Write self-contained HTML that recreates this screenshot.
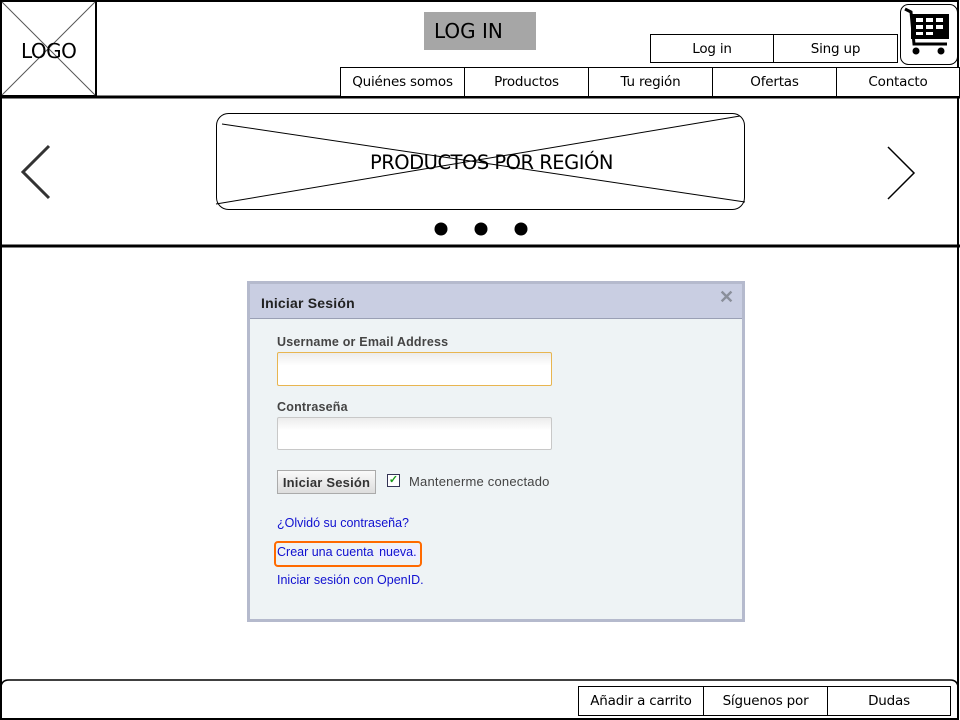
<!DOCTYPE html>
<html><head><meta charset="utf-8"><style>
*{margin:0;padding:0;box-sizing:border-box}
body{width:960px;height:720px;background:#fff;position:relative;overflow:hidden;font-family:"Liberation Sans",sans-serif}
.a{position:absolute}
.t{font-family:"DejaVu Sans","Liberation Sans",sans-serif}
.cell{position:absolute;border:1px solid #000;display:flex;align-items:center;justify-content:center;font-size:13.5px;font-family:"DejaVu Sans",sans-serif;background:#fff;letter-spacing:-.2px}
.lbl{font-family:"Liberation Sans",sans-serif;font-weight:bold;font-size:12.5px;color:#444;letter-spacing:.2px}
.lnk{font-size:12.5px;color:#1010d0;letter-spacing:0}
</style></head><body>
<svg class="a" style="left:0;top:0" width="960" height="720">
<rect x="1" y="1" width="957" height="718" fill="none" stroke="#000" stroke-width="2"/>
<line x1="0" y1="97" x2="960" y2="97" stroke="#000" stroke-width="3"/>
<line x1="0" y1="246" x2="960" y2="246" stroke="#000" stroke-width="3"/>
<rect x="1" y="1" width="95" height="95" fill="none" stroke="#000" stroke-width="2"/>
<line x1="2" y1="2" x2="95" y2="95" stroke="#555" stroke-width="1"/>
<line x1="95" y1="2" x2="2" y2="95" stroke="#555" stroke-width="1"/>
<rect x="216.5" y="113.5" width="528" height="96" rx="12" fill="none" stroke="#000"/>
<line x1="222" y1="124" x2="745" y2="202" stroke="#000"/>
<line x1="216" y1="204" x2="740" y2="116" stroke="#000"/>
<circle cx="441" cy="229" r="6.5"/><circle cx="481" cy="229" r="6.5"/><circle cx="521" cy="229" r="6.5"/>
<polyline points="49,146 23,172 49,198" fill="none" stroke="#333" stroke-width="3"/>
<polyline points="888,147 914,173 888,199" fill="none" stroke="#000" stroke-width="1.5"/>
<rect x="900.5" y="4.5" width="57" height="60" rx="8" fill="none" stroke="#000"/>
<path d="M905 9 L911 12 L914 44 L947 44" fill="none" stroke="#000" stroke-width="3"/>
<rect x="911" y="14" width="38" height="25" fill="#000"/>
<g fill="#fff"><rect x="916" y="18" width="7" height="4"/><rect x="926" y="18" width="7" height="4"/><rect x="936" y="18" width="7" height="4"/><rect x="916" y="25" width="7" height="4"/><rect x="926" y="25" width="7" height="4"/><rect x="936" y="25" width="7" height="4"/><rect x="916" y="32" width="7" height="3"/><rect x="926" y="32" width="7" height="3"/></g>
<circle cx="916" cy="51" r="3.5"/><circle cx="941" cy="51" r="3.5"/>
<path d="M1 720 L1 688 Q1 680 9 680 L950 680 Q958 680 958 688 L958 720" fill="none" stroke="#000" stroke-width="1.5"/>
</svg>
<div class="a t" style="left:21px;top:39px;font-size:20px;letter-spacing:-.5px">LOGO</div>
<div class="a t" style="left:424px;top:12px;width:112px;height:38px;background:#a6a6a6;font-size:20px;padding:7px 0 0 10px">LOG IN</div>
<div class="cell" style="left:650px;top:34px;width:124px;height:29px">Log in</div>
<div class="cell" style="left:773px;top:34px;width:125px;height:29px">Sing up</div>
<div class="cell" style="left:340px;top:67px;width:125px;height:30px">Quiénes somos</div>
<div class="cell" style="left:464px;top:67px;width:125px;height:30px">Productos</div>
<div class="cell" style="left:588px;top:67px;width:125px;height:30px">Tu región</div>
<div class="cell" style="left:712px;top:67px;width:125px;height:30px">Ofertas</div>
<div class="cell" style="left:836px;top:67px;width:124px;height:30px">Contacto</div>
<div class="a t" style="left:370px;top:151px;font-size:19.5px;letter-spacing:-.5px">PRODUCTOS POR REGIÓN</div>
<div class="cell" style="left:578px;top:686px;width:126px;height:30px">Añadir a carrito</div>
<div class="cell" style="left:703px;top:686px;width:125px;height:30px">Síguenos por</div>
<div class="cell" style="left:827px;top:686px;width:124px;height:30px">Dudas</div>

<div class="a" style="left:247px;top:281px;width:498px;height:341px;border:3px solid #b5bacd;background:#eef3f5">
 <div class="a" style="left:0;top:0;width:492px;height:35px;background:#c9cee2;border-bottom:1px solid #9aa0b5"></div>
 <div class="a lbl" style="left:11px;top:11px;font-size:14px;color:#222">Iniciar Sesión</div>
 <div class="a" style="left:469px;top:3px;font-size:18px;font-weight:bold;color:#8a8f9a">✕</div>
 <div class="a lbl" style="left:27px;top:51px">Username or Email Address</div>
 <div class="a" style="left:27px;top:68px;width:275px;height:34px;border:1.5px solid #e8b550;border-radius:2px;background:linear-gradient(#ececec,#fff 40%)"></div>
 <div class="a lbl" style="left:27px;top:116px">Contraseña</div>
 <div class="a" style="left:27px;top:133px;width:275px;height:33px;border:1px solid #c8c8c8;border-radius:2px;background:linear-gradient(#ececec,#fff 40%)"></div>
 <div class="a lbl" style="left:27px;top:186px;width:99px;height:24px;border:1px solid #aaa;background:linear-gradient(#fafafa,#ddd);display:flex;align-items:center;justify-content:center;font-size:13px;color:#333">Iniciar Sesión</div>
 <div class="a" style="left:137px;top:190px;width:13px;height:13px;border:1px solid #335;background:#fff;color:#1a9a1a;font-size:11px;line-height:11px;text-align:center;font-weight:bold">✓</div>
 <div class="a" style="left:159px;top:190px;font-size:13px;color:#444;letter-spacing:.2px">Mantenerme conectado</div>
 <div class="a lnk" style="left:27px;top:232px">¿Olvidó su contraseña?</div>
 <div class="a" style="left:24px;top:257px;width:148px;height:26px;border:2px solid #ff6a00;border-radius:4px"></div>
 <div class="a lnk" style="left:27px;top:261px">Crear una cuenta <span style="background:#eef;padding:0 2px">nueva.</span></div>
 <div class="a lnk" style="left:27px;top:289px">Iniciar sesión con OpenID.</div>
</div>
</body></html>
